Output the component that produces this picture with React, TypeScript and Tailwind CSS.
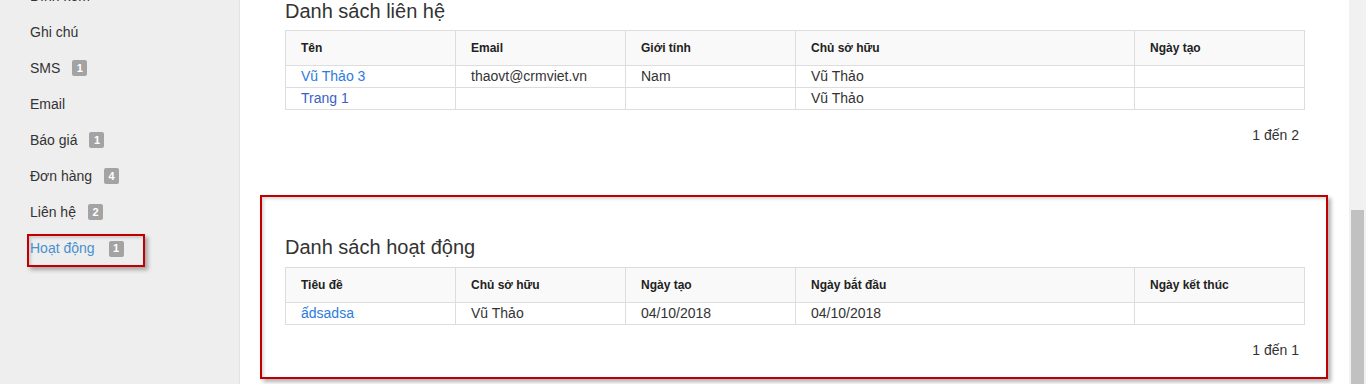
const sideItems: { label: string; count?: number; active?: boolean }[] = [
  { label: "Đính kèm" },
  { label: "Ghi chú" },
  { label: "SMS", count: 1 },
  { label: "Email" },
  { label: "Báo giá", count: 1 },
  { label: "Đơn hàng", count: 4 },
  { label: "Liên hệ", count: 2 },
  { label: "Hoạt động", count: 1, active: true },
];

const colW = ["w-[170px]", "w-[170px]", "w-[170px]", "w-[339px]", "w-[170px]"];

function Badge({ n, wide }: { n: number; wide?: boolean }) {
  return (
    <span
      className={`${wide ? "ml-[14px]" : "ml-[12px]"} inline-flex h-[16px] min-w-[15px] items-center justify-center rounded-[2px] bg-[#a3a3a3] px-[4px] text-[11px] font-bold leading-none text-white`}
    >
      {n}
    </span>
  );
}

function DataTable({
  heads,
  rows,
}: {
  heads: string[];
  rows: { text: string; link?: string }[][];
}) {
  return (
    <table className="w-full table-fixed border-collapse text-[14px] text-[#333]">
      <thead>
        <tr className="h-[35px] bg-[#f9f9f9]">
          {heads.map((h, i) => (
            <th
              key={h}
              className={`${colW[i]} border border-[#dddddd] px-[15px] text-left text-[12px] font-bold text-[#222]`}
            >
              {h}
            </th>
          ))}
        </tr>
      </thead>
      <tbody>
        {rows.map((r, ri) => (
          <tr key={ri} className="h-[22px]">
            {r.map((c, ci) => (
              <td
                key={ci}
                className="border border-[#dddddd] px-[15px] py-0 leading-[19px]"
              >
                {c.link ? (
                  <span style={{ color: c.link }}>{c.text}</span>
                ) : (
                  c.text
                )}
              </td>
            ))}
          </tr>
        ))}
      </tbody>
    </table>
  );
}

export default function App() {
  return (
    <div className="flex h-[384px] w-[1366px] overflow-hidden bg-white font-['Liberation_Sans',Arial,sans-serif]">
      {/* sidebar */}
      <aside className="w-[240px] shrink-0 border-r border-[#e3e3e3] bg-[#eeeeee]">
        <ul className="mt-[-22px] pl-[30px] text-[14px] text-[#333]">
          {sideItems.map((it) =>
            it.active ? (
              <li key={it.label} className="flex h-[36px] items-center">
                <span className="-ml-[3px] mt-[4px] flex h-[33px] w-[118px] items-center border-2 border-[#c00000] pb-[3px] pl-[1px] shadow-[3px_3px_4px_rgba(0,0,0,0.3),inset_2px_2px_3px_rgba(0,0,0,0.15)]">
                  <span className="text-[#4a8fcf]">{it.label}</span>
                  {it.count && <Badge n={it.count} wide />}
                </span>
              </li>
            ) : (
              <li key={it.label} className="flex h-[36px] items-center">
                <span>{it.label}</span>
                {it.count && <Badge n={it.count} />}
              </li>
            )
          )}
        </ul>
      </aside>

      {/* main content */}
      <main className="w-[1109px] shrink-0 pl-[45px] pr-[46px]">
        <h2 className="mt-[-1px] text-[20px] leading-[24px] text-[#333]">
          Danh sách liên hệ
        </h2>
        <div className="mt-[7px]">
          <DataTable
            heads={["Tên", "Email", "Giới tính", "Chủ sở hữu", "Ngày tạo"]}
            rows={[
              [
                { text: "Vũ Thảo 3", link: "#2b7be0" },
                { text: "thaovt@crmviet.vn" },
                { text: "Nam" },
                { text: "Vũ Thảo" },
                { text: "" },
              ],
              [
                { text: "Trang 1", link: "#3a62c2" },
                { text: "" },
                { text: "" },
                { text: "Vũ Thảo" },
                { text: "" },
              ],
            ]}
          />
        </div>
        <p className="mt-[16px] pr-[4px] text-right text-[14px] leading-[18px] text-[#333]">
          1 đến 2
        </p>

        <section className="-ml-[25px] -mr-[25px] mt-[51px] h-[184px] border-2 border-[#c00000] px-[23px] shadow-[3px_3px_4px_rgba(0,0,0,0.3),inset_2px_2px_3px_rgba(0,0,0,0.15)]">
          <h2 className="mt-[38px] text-[20px] leading-[24px] text-[#333]">
            Danh sách hoạt động
          </h2>
          <div className="mt-[8px]">
            <DataTable
              heads={["Tiêu đề", "Chủ sở hữu", "Ngày tạo", "Ngày bắt đầu", "Ngày kết thúc"]}
              rows={[
                [
                  { text: "ấdsadsa", link: "#2b7be0" },
                  { text: "Vũ Thảo" },
                  { text: "04/10/2018" },
                  { text: "04/10/2018" },
                  { text: "" },
                ],
              ]}
            />
          </div>
          <p className="mt-[16px] pr-[4px] text-right text-[14px] leading-[18px] text-[#333]">
            1 đến 1
          </p>
        </section>
      </main>

      {/* scrollbar */}
      <div className="flex w-[17px] shrink-0 flex-col bg-[#f1f1f1]">
        <div className="h-[210px]" />
        <div className="mx-[2px] flex-1 bg-[#c1c1c1]" />
      </div>
    </div>
  );
}
